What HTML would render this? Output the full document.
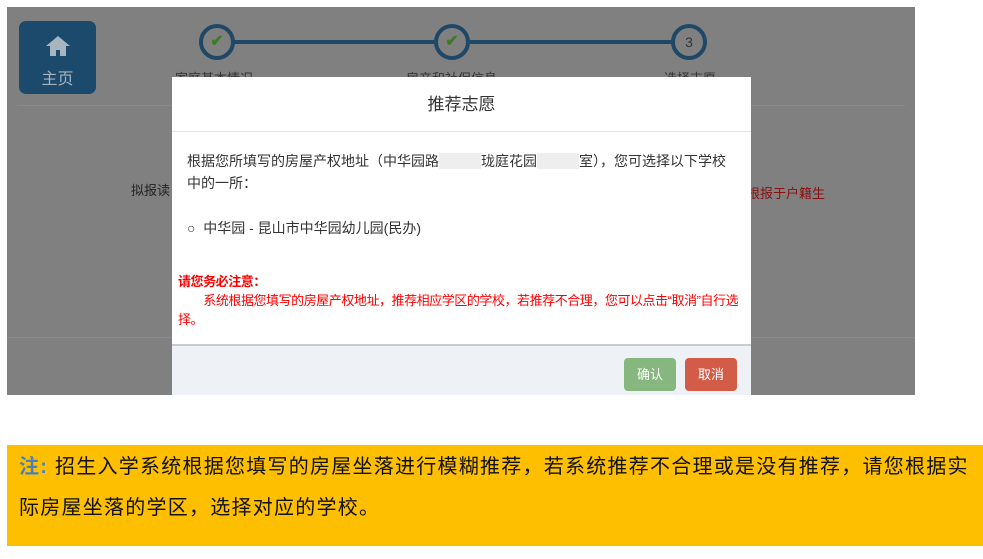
<!DOCTYPE html>
<html><head><meta charset="utf-8"><style>
*{margin:0;padding:0;box-sizing:border-box}
body{width:983px;height:559px;background:#fff;position:relative;overflow:hidden;font-family:"Liberation Sans","Noto Sans CJK SC",sans-serif}
.a{position:absolute}
.ov{left:7px;top:7px;width:908px;height:388px;background:#808080;overflow:hidden}
.home{left:12px;top:14px;width:77px;height:73px;background:#1b4a6c;border-radius:7px;color:#a8b4c0;text-align:center;font-size:16px}
.c{width:36px;height:36px;border:4px solid #1f4866;border-radius:50%;text-align:center;line-height:28px;color:#3e7a2a;font-size:16px;font-weight:bold;background:#808080}
.lbl{font-size:13px;color:#333;top:61px}
.modal{left:172px;top:77px;width:579px;height:318px;background:#fff}
.hd{height:55px;border-bottom:1px solid #e5e5e5;text-align:center;line-height:55px;font-size:17px;color:#333}
.ft{left:0;top:267px;width:579px;height:51px;background:#eef1f6;border-top:2px solid #c8ccd2}
.btn{top:12px;width:52px;height:33px;border-radius:4px;color:#fff;font-size:13px;text-align:center;line-height:33px}
.y{left:7px;top:445px;width:976px;height:101px;background:#fdbf00;padding:2px 0 0 12px;font-size:20px;letter-spacing:1.25px;line-height:41px;color:#111;white-space:nowrap}
</style></head><body>
<div class="a ov">
 <div class="a home"><svg width="28" height="24" viewBox="0 0 28 24" style="margin-top:13px"><path d="M14 2L2 12h4v10h6v-6h4v6h6V12h4z" fill="#a8b4c0"/></svg><div style="margin-top:2px">主页</div></div>
 <div class="a" style="left:210px;top:33px;width:475px;height:4px;background:#1f4866"></div>
 <div class="a c" style="left:192px;top:17px">✔</div>
 <div class="a c" style="left:427px;top:17px">✔</div>
 <div class="a c" style="left:664px;top:17px;color:#333;font-weight:normal;font-size:14px">3</div>
 <div class="a lbl" style="left:168px">家庭基本情况</div>
 <div class="a lbl" style="left:399px">房产和社保信息</div>
 <div class="a lbl" style="left:657px">选择志愿</div>
 <div class="a" style="left:10px;top:98px;width:888px;height:1px;background:#8a8a8a"></div>
 <div class="a" style="left:124px;top:173px;font-size:13px;color:#222">拟报读</div>
 <div class="a" style="left:740px;top:176px;font-size:13px;color:#8a1010">根报于户籍生</div>
 <div class="a" style="left:0;top:330px;width:908px;height:1px;background:#8a8a8a"></div>
</div>
<div class="a modal">
 <div class="hd">推荐志愿</div>
 <div class="a" style="left:15px;top:73px;width:550px;font-size:14px;line-height:22px;color:#333">根据您所填写的房屋产权地址（中华园路<span style="color:#eee;background:#eee">　　　</span>珑庭花园<span style="color:#eee;background:#eee">　　　</span>室），您可选择以下学校中的一所：</div>
 <div class="a" style="left:15px;top:141px;font-size:14px;color:#333">○&nbsp; 中华园 - 昆山市中华园幼儿园(民办)</div>
 <div class="a" style="left:6px;top:195px;width:575px;font-size:13px;line-height:19px;color:#f00;white-space:nowrap;letter-spacing:-0.45px"><b>请您务必注意：</b><br>&nbsp;&nbsp;&nbsp;&nbsp;&nbsp;&nbsp;&nbsp;&nbsp;系统根据您填写的房屋产权地址，推荐相应学区的学校，若推荐不合理，您可以点击“取消”自行选<br>择。</div>
 <div class="a ft">
  <div class="a btn" style="left:452px;background:#86b77f">确认</div>
  <div class="a btn" style="left:513px;background:#d35c48">取消</div>
 </div>
</div>
<div class="a y"><span style="color:#4a7fc0;font-weight:bold">注:</span> 招生入学系统根据您填写的房屋坐落进行模糊推荐，若系统推荐不合理或是没有推荐，请您根据实<br>际房屋坐落的学区，选择对应的学校。</div>
</body></html>
